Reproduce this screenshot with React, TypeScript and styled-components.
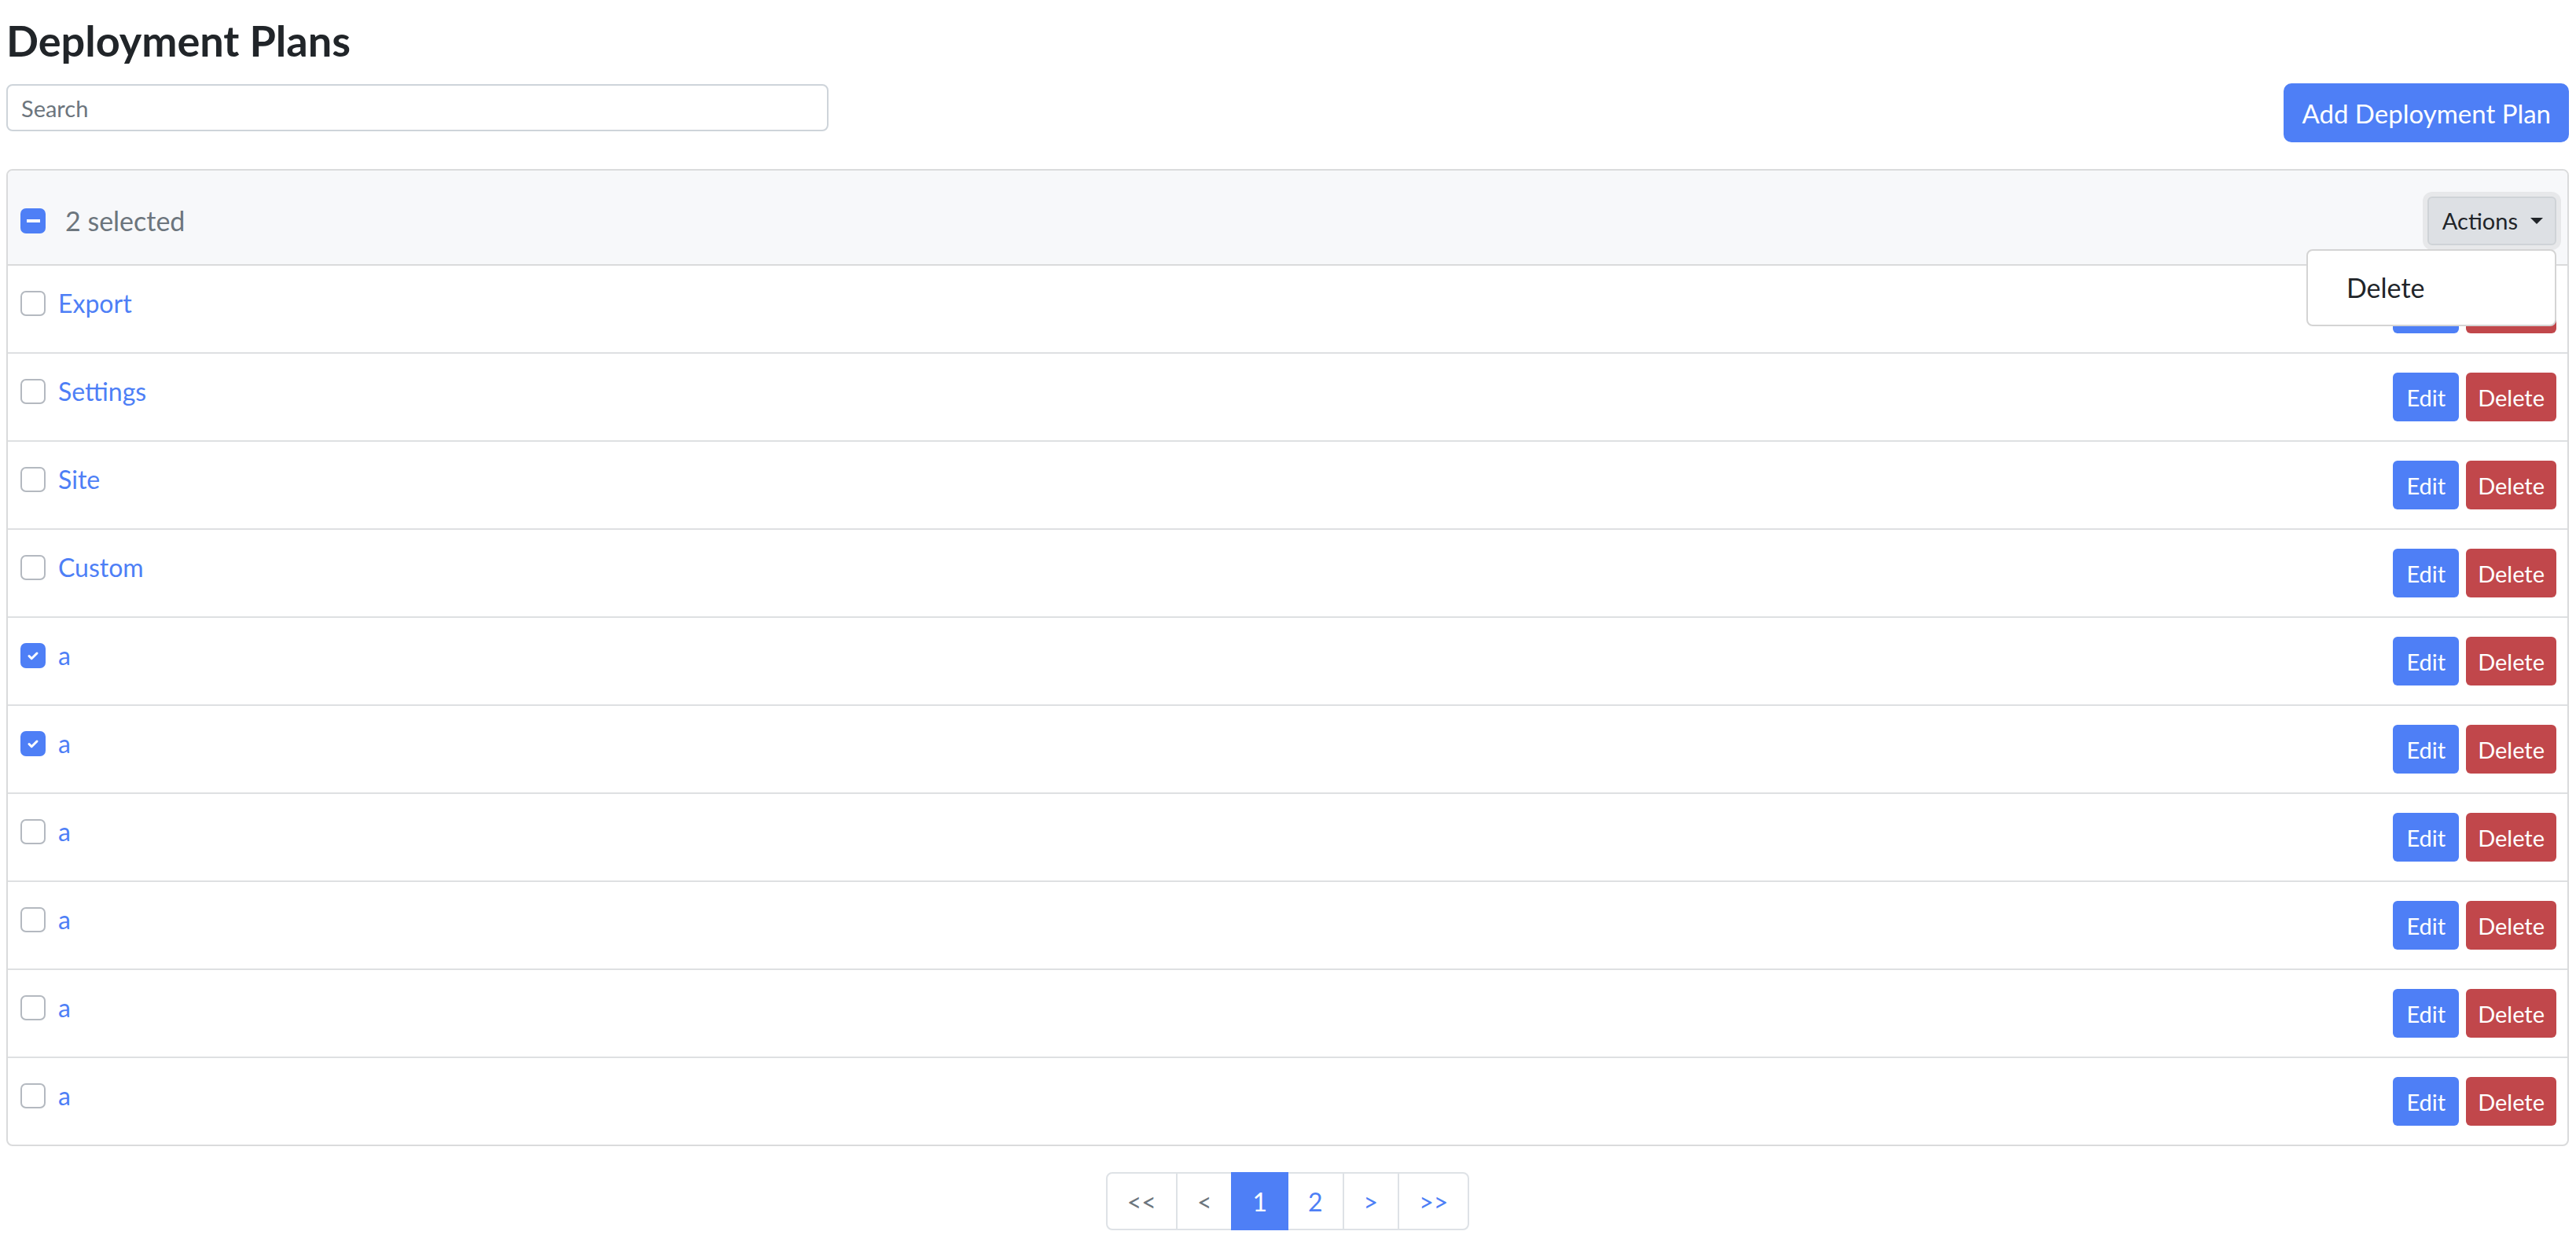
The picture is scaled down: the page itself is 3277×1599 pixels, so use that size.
import React from 'react';
import styled, { createGlobalStyle } from 'styled-components';

const GlobalStyle = createGlobalStyle`
  * {
    box-sizing: border-box;
  }
  html,
  body {
    margin: 0;
    padding: 0;
    background: #ffffff;
    font-family: Lato, 'Liberation Sans', sans-serif;
    color: #212529;
  }
`;

const primary = '#4e7ff6';
const danger = '#c1474b';
const muted = '#6c757d';

const Page = styled.div`
  padding: 0 9px 0 8px;
`;

const Title = styled.h1`
  margin: 18px 0 0;
  font-size: 54px;
  line-height: 67px;
  font-weight: 700;
  color: #212529;
`;

const Toolbar = styled.div`
  display: flex;
  justify-content: space-between;
  align-items: flex-start;
  margin-top: 21px;
`;

const SearchInput = styled.input`
  width: 1046px;
  height: 60px;
  margin-top: 1px;
  padding: 0 17px;
  border: 2px solid #ced4da;
  border-radius: 8px;
  font-family: inherit;
  font-size: 29px;
  color: #212529;
  outline: none;

  &::placeholder {
    color: ${muted};
  }
`;

const AddButton = styled.button`
  height: 75px;
  padding: 0 23px;
  border: none;
  border-radius: 10px;
  background: ${primary};
  color: #ffffff;
  font-family: inherit;
  font-size: 33px;
`;

const Card = styled.div`
  margin-top: 34px;
  border: 2px solid #dadbdc;
  border-radius: 8px;
`;

const CardHeader = styled.div`
  display: flex;
  justify-content: space-between;
  align-items: center;
  height: 121px;
  padding: 8px 14px 0 16px;
  background: #f7f8fa;
  border-bottom: 2px solid #dadbdc;
  border-radius: 6px 6px 0 0;
`;

const Selection = styled.div`
  display: flex;
  align-items: center;
  gap: 25px;
  font-size: 34px;
  color: ${muted};
`;

const Box = styled.span<{ $on?: boolean }>`
  display: inline-flex;
  align-items: center;
  justify-content: center;
  flex: none;
  width: 32px;
  height: 32px;
  border-radius: 7px;
  border: 2px solid ${(p) => (p.$on ? primary : '#b4b9c0')};
  background: ${(p) => (p.$on ? primary : '#ffffff')};
`;

const Dash = styled.span`
  width: 17px;
  height: 4px;
  background: #ffffff;
`;

const ActionsWrap = styled.div`
  position: relative;
`;

const ActionsButton = styled.button`
  display: flex;
  align-items: center;
  gap: 16px;
  height: 62px;
  padding: 0 15px 0 17px;
  border: 2px solid #cfd3d7;
  border-radius: 6px;
  background: #dde0e4;
  box-shadow: 0 0 0 6px #e7e8ea;
  font-family: inherit;
  font-size: 29px;
  color: #212529;
`;

const Caret = styled.span`
  width: 0;
  height: 0;
  border-top: 8px solid #212529;
  border-left: 8px solid transparent;
  border-right: 8px solid transparent;
`;

const Menu = styled.div`
  position: absolute;
  top: calc(100% + 5px);
  right: 0;
  width: 318px;
  padding: 16px 0;
  background: #ffffff;
  border: 2px solid #d4d4d4;
  border-radius: 8px;
  z-index: 10;
`;

const MenuItem = styled.div`
  display: flex;
  align-items: center;
  height: 62px;
  padding: 0 49px;
  font-size: 34px;
  color: #212529;
`;

const Row = styled.div`
  display: flex;
  justify-content: space-between;
  align-items: center;
  height: 110px;
  padding: 0 14px 0 16px;

  & + & {
    height: 112px;
    border-top: 2px solid #dee0e2;
  }
`;

const RowLeft = styled.div`
  align-self: flex-start;
  display: flex;
  align-items: center;
  gap: 16px;
  height: 48px;
  margin-top: 24px;
`;

const NameLink = styled.a`
  font-size: 32px;
  line-height: 48px;
  color: ${primary};
  text-decoration: none;
`;

const RowButtons = styled.div`
  display: flex;
  gap: 9px;
`;

const SmallButton = styled.button<{ $variant: 'edit' | 'delete' }>`
  height: 62px;
  padding: 0 ${(p) => (p.$variant === 'edit' ? 17 : 15)}px;
  border: none;
  border-radius: 6px;
  background: ${(p) => (p.$variant === 'edit' ? primary : danger)};
  color: #ffffff;
  font-family: inherit;
  font-size: 29px;
`;

const Pagination = styled.ul`
  display: flex;
  justify-content: center;
  margin: 33px 0 0;
  padding: 0;
  list-style: none;
`;

const PageItem = styled.li<{ $state: 'disabled' | 'active' | 'normal' }>`
  position: relative;
  display: flex;
  align-items: center;
  height: 74px;
  padding: 0 25px;
  margin-left: -2px;
  font-size: 32px;
  border: 2px solid ${(p) => (p.$state === 'active' ? primary : '#dee2e6')};
  background: ${(p) => (p.$state === 'active' ? primary : '#ffffff')};
  color: ${(p) =>
    p.$state === 'active' ? '#ffffff' : p.$state === 'disabled' ? muted : primary};
  z-index: ${(p) => (p.$state === 'active' ? 1 : 0)};

  &:first-child {
    margin-left: 0;
    border-radius: 8px 0 0 8px;
  }
  &:last-child {
    border-radius: 0 8px 8px 0;
  }
`;

const Check = () => (
  <svg width="20" height="20" viewBox="0 0 20 20">
    <path
      d="M5 10.5l3.2 3.2L15 7"
      fill="none"
      stroke="#ffffff"
      strokeWidth="3"
      strokeLinecap="round"
      strokeLinejoin="round"
    />
  </svg>
);

const plans = [
  { name: 'Export', checked: false },
  { name: 'Settings', checked: false },
  { name: 'Site', checked: false },
  { name: 'Custom', checked: false },
  { name: 'a', checked: true },
  { name: 'a', checked: true },
  { name: 'a', checked: false },
  { name: 'a', checked: false },
  { name: 'a', checked: false },
  { name: 'a', checked: false },
];

const pages: { label: string; state: 'disabled' | 'active' | 'normal' }[] = [
  { label: '<<', state: 'disabled' },
  { label: '<', state: 'disabled' },
  { label: '1', state: 'active' },
  { label: '2', state: 'normal' },
  { label: '>', state: 'normal' },
  { label: '>>', state: 'normal' },
];

export default function App() {
  return (
    <Page>
      <GlobalStyle />
      <Title>Deployment Plans</Title>
      <Toolbar>
        <SearchInput placeholder="Search" />
        <AddButton>Add Deployment Plan</AddButton>
      </Toolbar>

      <Card>
        <CardHeader>
          <Selection>
            <Box $on>
              <Dash />
            </Box>
            2 selected
          </Selection>
          <ActionsWrap>
            <ActionsButton>
              Actions
              <Caret />
            </ActionsButton>
            <Menu>
              <MenuItem>Delete</MenuItem>
            </Menu>
          </ActionsWrap>
        </CardHeader>

        {plans.map((plan, i) => (
          <Row key={i}>
            <RowLeft>
              <Box $on={plan.checked}>{plan.checked && <Check />}</Box>
              <NameLink href="#">{plan.name}</NameLink>
            </RowLeft>
            <RowButtons>
              <SmallButton $variant="edit">Edit</SmallButton>
              <SmallButton $variant="delete">Delete</SmallButton>
            </RowButtons>
          </Row>
        ))}
      </Card>

      <Pagination>
        {pages.map((p) => (
          <PageItem key={p.label} $state={p.state}>
            {p.label}
          </PageItem>
        ))}
      </Pagination>
    </Page>
  );
}
